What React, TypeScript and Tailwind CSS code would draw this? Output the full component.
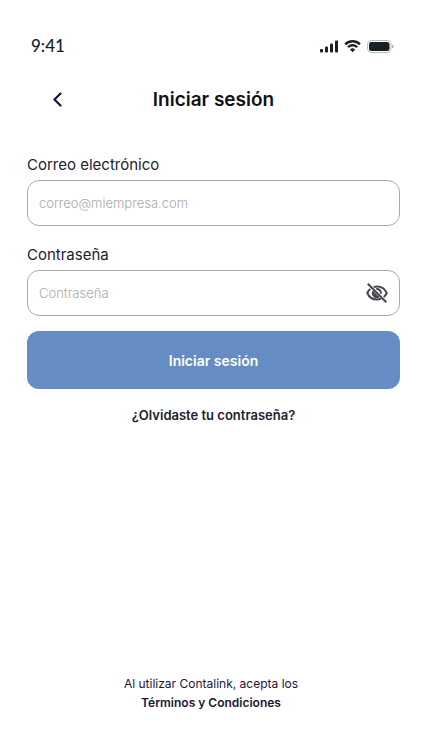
import { useState } from "react";

function SignalIcon() {
  return (
    <svg width="18" height="13" viewBox="0 0 18 13" fill="#172126" aria-hidden="true">
      <rect x="0" y="9" width="3" height="3.5" rx="1" />
      <rect x="5" y="6.5" width="3" height="6" rx="1" />
      <rect x="10" y="3.5" width="3" height="9" rx="1" />
      <rect x="15" y="0.5" width="3" height="12" rx="1" />
    </svg>
  );
}

function WifiIcon() {
  return (
    <svg width="17" height="12" viewBox="0 0 17 12" fill="#172126" aria-hidden="true">
      <path d="M8.57 2.47c2.33 0 4.58.9 6.27 2.5.13.12.33.12.46 0l1.22-1.23a.34.34 0 0 0 0-.49 11.5 11.5 0 0 0-15.9 0 .34.34 0 0 0 0 .49l1.22 1.23c.13.12.33.12.46 0a9.1 9.1 0 0 1 6.27-2.5Zm0 4.06c1.28 0 2.52.48 3.47 1.34.13.12.33.12.46 0l1.22-1.24a.35.35 0 0 0 0-.5 7.5 7.5 0 0 0-10.3 0 .35.35 0 0 0 0 .5l1.22 1.24c.13.12.33.12.46 0a5.2 5.2 0 0 1 3.47-1.34Zm2.37 2.73c.13.13.13.35 0 .48l-2.14 2.16a.33.33 0 0 1-.46 0L6.2 9.74a.33.33 0 0 1 0-.48 3.68 3.68 0 0 1 4.74 0Z" />
    </svg>
  );
}

function BatteryIcon() {
  return (
    <svg width="27" height="13" viewBox="0 0 27 13" aria-hidden="true">
      <rect x="0.5" y="0.5" width="23.5" height="12" rx="3.8" fill="none" stroke="#172126" strokeOpacity="0.3" />
      <path d="M25 4.5v4c.8-.3 1.4-1.1 1.4-2s-.6-1.7-1.4-2Z" fill="#172126" fillOpacity="0.4" />
      <rect x="2" y="2" width="20.5" height="9" rx="2.5" fill="#172126" />
    </svg>
  );
}

function EyeOffIcon() {
  return (
    <svg width="24" height="24" viewBox="0 0 24 24" fill="none" stroke="#46464c" strokeWidth="2" aria-hidden="true">
      <path d="M8.6 6.1A10.7 10.7 0 0 1 12 5.5c4.3 0 8 2.6 9.7 6.5a10.6 10.6 0 0 1-2.9 3.9" />
      <path d="M5.3 8A10.6 10.6 0 0 0 2.3 12c1.7 3.9 5.4 6.5 9.7 6.5 1.4 0 2.7-.3 3.9-.8" />
      <path d="M8.3 10.2a4.1 4.1 0 0 0 5.5 5.5Z" fill="#46464c" stroke="none" />
      <path d="M8.3 10.2a4.1 4.1 0 0 0 5.5 5.5" />
      <path d="M11.3 8.1a4 4 0 0 1 4.6 4.6" />
      <path d="M2.8 2.8 21.3 21.3" />
    </svg>
  );
}

const labelClass = "pb-0.5 text-[15px] leading-[26px]";

const inputClass =
  "h-[46px] w-full rounded-xl border border-[#a9a9ae] bg-white pl-[11px] text-[13px] font-light text-[#1b2230] outline-none placeholder:text-[#a9a9ad] placeholder:opacity-100";

export default function App() {
  const [visible, setVisible] = useState(false);

  return (
    <div className="flex min-h-screen flex-col bg-white pt-8 pb-[38px] font-['Inter',sans-serif] text-[#1b2230]">
      <div className="flex h-7 items-center justify-between pr-7 pl-[31px]">
        <span className="font-['Lato',sans-serif] text-[17px] leading-7 font-medium text-[#172126]">9:41</span>
        <div className="flex items-center gap-1.5">
          <SignalIcon />
          <WifiIcon />
          <BatteryIcon />
        </div>
      </div>

      <header className="mt-6 grid h-8 grid-cols-[60px_1fr_60px] items-center pr-[22px] pl-[27px]">
        <button type="button" aria-label="Volver" className="flex h-8 items-center justify-center">
          <svg width="10" height="16" viewBox="0 0 10 16" fill="none" stroke="#16113a" strokeWidth="2.2" strokeLinecap="round" strokeLinejoin="round" aria-hidden="true">
            <path d="M8.500 1.500 2.500 7.500l6 6" />
          </svg>
        </button>
        <h1 className="text-center text-[19px] leading-8 font-semibold text-[#111114]">Iniciar sesión</h1>
      </header>

      <form className="mt-9 flex flex-col pr-[22px] pl-[27px]" onSubmit={(e) => e.preventDefault()}>
        <label htmlFor="email" className={labelClass}>
          Correo electrónico
        </label>
        <input id="email" type="email" placeholder="correo@miempresa.com" className={`${inputClass} pr-3`} />

        <label htmlFor="password" className={`mt-4 ${labelClass}`}>
          Contraseña
        </label>
        <div className="relative">
          <input id="password" type={visible ? "text" : "password"} placeholder="Contraseña" className={`${inputClass} pr-12`} />
          <button
            type="button"
            aria-label="Mostrar contraseña"
            aria-pressed={visible}
            onClick={() => setVisible(!visible)}
            className="absolute inset-y-0 right-0 flex w-[46px] items-center justify-center"
          >
            <EyeOffIcon />
          </button>
        </div>

        <button type="submit" className="mt-[15px] h-[58px] rounded-xl bg-[#658dc4] text-[14px] font-semibold text-white">
          Iniciar sesión
        </button>
        <a href="#recuperar" className="mt-4 self-center text-[13px] leading-5 font-semibold">
          ¿Olvidaste tu contraseña?
        </a>
      </form>

      <footer className="mt-auto px-6 text-center text-xs leading-[19px] text-[#1c1638]">
        <p>Al utilizar Contalink, acepta los</p>
        <a href="#terminos" className="font-semibold">
          Términos y Condiciones
        </a>
      </footer>
    </div>
  );
}
